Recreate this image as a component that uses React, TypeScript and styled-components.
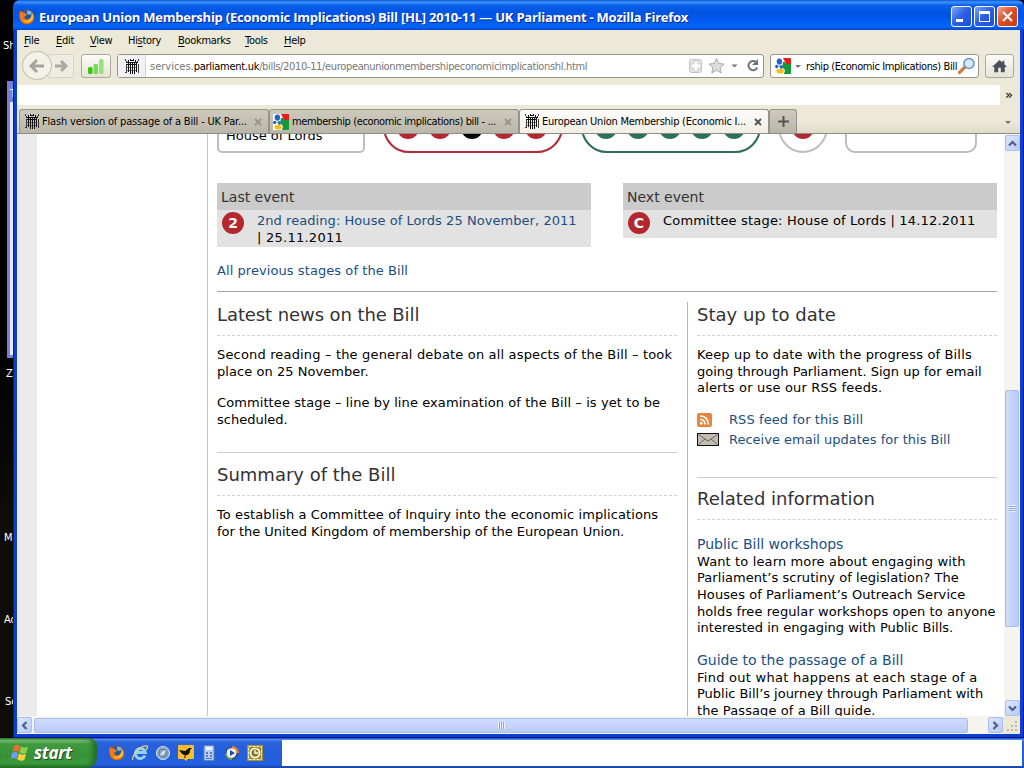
import React from 'react';
import styled, { createGlobalStyle, css } from 'styled-components';

const GlobalStyle = createGlobalStyle`
  * {
    box-sizing: border-box;
  }

  body {
    margin: 0;
    overflow: hidden;
    background: #000;
  }
`;

const stagesRed = [0, 1, 2, 3, 4];
const stagesGreen = [0, 1, 2, 3, 4];

const PortcullisIcon: React.FC = () => (
  <svg width="14" height="15" viewBox="0 0 14 15" shapeRendering="crispEdges" fill="#111">
    <path d="M3 1h1v2H3zM5 0h1v2H5zM8 0h1v2H8zM10 1h1v2h-1zM6 1h2v1H6zM1 3h12v1H1zM2 5h10v1H2z" />
    <path d="M3 4h1v9H3zM5 4h1v11H5zM7 4h1v11H7zM9 4h1v11H9zM11 4h1v9h-1z" />
    <path d="M0 0h1v2H0zM13 0h1v2h-1zM1 2h1v1H1zM12 2h1v1h-1zM1 5h1v9H1zM13 5h1v9h-1zM0 13h1v1H0z" opacity=".8" />
    <path d="M2 8h10v1H2zM2 11h10v1H2z" opacity=".45" />
  </svg>
);

const GoogleIcon: React.FC = () => (
  <svg width="16" height="16" viewBox="0 0 16 16">
    <path d="M0 0h10v16H0z" fill="#fff" />
    <path d="M8 0h7a1 1 0 0 1 1 1v5h-5z" fill="#e81e1e" />
    <path d="M8 4l2 0 1 2h5v9a1 1 0 0 1-1 1H9l1-4-3-3z" fill="#129a3a" />
    <ellipse cx="4.4" cy="3.6" rx="2.7" ry="3.1" fill="#2462c8" />
    <circle cx="1.7" cy="8.5" r="1.7" fill="#2462c8" />
    <path d="M4 8l3-1 1 3-2 1z" fill="#2462c8" />
    <ellipse cx="5.2" cy="13.2" rx="3.6" ry="2.4" fill="#f5bd16" />
  </svg>
);

const FirefoxIcon: React.FC = () => (
  <svg width="16" height="16" viewBox="0 0 16 16">
    <circle cx="8" cy="8" r="7.4" fill="#c84408" />
    <circle cx="8.5" cy="6.4" r="5.4" fill="#24569c" />
    <path d="M8 2c2-1 4 0 5 2l-2 2-3-1z" fill="#75b9e2" />
    <path d="M1 2l2 1 3 1 2 2-3 2c1 3 5 3 7 1 1-2 1-4 0-6 3 2 4 6 2 9-3 4-9 4-12 0-2-3-2-7-1-10z" fill="#ee7b13" />
    <path d="M13 4c2 3 1 8-3 9-3 1-5 0-6-2 3 2 8 1 9-7z" fill="#fbc72f" />
  </svg>
);

const App: React.FC = () => (
  <Screen>
    <GlobalStyle />
    <Workspace>
      <Desktop>
        <BackWindow>
          <BackTitle>T</BackTitle>
        </BackWindow>
        <DesktopLabel $x={3} $y={39}>Sh</DesktopLabel>
        <DesktopLabel $x={6} $y={367}>Z</DesktopLabel>
        <DesktopLabel $x={4} $y={531}>M</DesktopLabel>
        <DesktopLabel $x={4} $y={613}>Ad</DesktopLabel>
        <DesktopLabel $x={5} $y={695}>Se</DesktopLabel>
      </Desktop>

      <BrowserWindow>
        <TitleBar>
          <FirefoxIcon />
          <TitleText>European Union Membership (Economic Implications) Bill [HL] 2010-11 — UK Parliament - Mozilla Firefox</TitleText>
          <WindowButton>
            <svg width="19" height="19"><path d="M4 12h7v3H4z" fill="#fff" /></svg>
          </WindowButton>
          <WindowButton>
            <svg width="19" height="19"><path d="M4 4h11v11H4zM5 7v7h9V7z" fill="#fff" fillRule="evenodd" /></svg>
          </WindowButton>
          <WindowButton $close>
            <svg width="19" height="19"><path d="M5 5l9 9M14 5l-9 9" stroke="#fff" strokeWidth="2.2" /></svg>
          </WindowButton>
        </TitleBar>

        <WindowBody>
          <MenuBar>
            <MenuItem $w={32}><u>F</u>ile</MenuItem>
            <MenuItem $w={34}><u>E</u>dit</MenuItem>
            <MenuItem $w={38}><u>V</u>iew</MenuItem>
            <MenuItem $w={50}>Hi<u>s</u>tory</MenuItem>
            <MenuItem $w={67}><u>B</u>ookmarks</MenuItem>
            <MenuItem $w={39}><u>T</u>ools</MenuItem>
            <MenuItem $w={40}><u>H</u>elp</MenuItem>
          </MenuBar>

          <NavBar>
            <BackButton>
              <svg width="16" height="16" viewBox="0 0 16 16"><path d="M8 2L2 8l6 6M2.500 8H15" fill="none" stroke="#a5a49c" strokeWidth="3" /></svg>
            </BackButton>
            <ForwardButton>
              <svg width="13" height="14" viewBox="0 0 13 14"><path d="M6 2l5 5-5 5M0 7h11" fill="none" stroke="#aaa9a1" strokeWidth="3" /></svg>
            </ForwardButton>
            <SignalButton>
              <svg width="16" height="15" viewBox="0 0 16 15">
                <rect x="0" y="8" width="4.500" height="7" rx="1.500" fill="#39c414" />
                <rect x="5.500" y="5" width="4.500" height="10" rx="1.500" fill="#74dc55" />
                <rect x="11" y="0" width="4.500" height="15" rx="1.500" fill="#93e578" />
              </svg>
            </SignalButton>
            <AddressBar>
              <SiteIdentity><PortcullisIcon /></SiteIdentity>
              <Url>services.<b>parliament.uk</b><span>/bills/2010-11/europeanunionmembershipeconomicimplicationshl.html</span></Url>
              <svg width="80" height="20" viewBox="0 0 80 20">
                <rect x="6.500" y="3.500" width="12" height="13" rx="2" fill="#e5e5e5" stroke="#c4c4c4" />
                <path d="M11 5h4v3h3v4h-3v3h-4v-3H8V8h3z" fill="#fafafa" stroke="#c6c6c6" strokeWidth=".7" />
                <path d="M33.500 2.500l2.300 5 5.200.6-4 3.500 1.200 5.400-4.700-2.800-4.700 2.800 1.200-5.400-4-3.500 5.200-.6z" fill="#dedede" stroke="#aaa" />
                <path d="M48.500 8.500h6l-3 3z" fill="#777" />
                <path d="M73 6a4.600 4.600 0 1 0 1.300 5.500" fill="none" stroke="#6e7478" strokeWidth="2" />
                <path d="M75 3v6h-6z" fill="#6e7478" />
              </svg>
            </AddressBar>
            <SearchBox>
              <GoogleIcon />
              <svg width="14" height="8"><path d="M4 3h6L7 6z" fill="#777" /></svg>
              <SearchText>rship (Economic Implications) Bill</SearchText>
              <svg width="18" height="18" viewBox="0 0 18 18">
                <path d="M1.500 15.500L7 10" stroke="#c98145" strokeWidth="3.200" strokeLinecap="round" />
                <circle cx="11" cy="6.500" r="5" fill="#d4eafb" stroke="#6b93c6" strokeWidth="1.600" />
              </svg>
            </SearchBox>
            <HomeButton>
              <svg width="15" height="14" viewBox="0 0 17 16"><path d="M8.500 1L0 9h2.500v6h4.500v-5h3v5h4.500V9H17l-3-3V2h-2v2z" fill="#49525a" /></svg>
            </HomeButton>
          </NavBar>

          <BookmarkBar>
            <BookmarkBlank />
            <Chevron>»</Chevron>
          </BookmarkBar>

          <TabStrip>
            <Tab>
              <PortcullisIcon />
              <TabText $ls={-0.18}>Flash version of passage of a Bill - UK Par...</TabText>
              <CloseMark />
            </Tab>
            <Tab $tight>
              <GoogleIcon />
              <TabText $ls={-0.38}>membership (economic implications) bill - ...</TabText>
              <CloseMark />
            </Tab>
            <Tab $active>
              <PortcullisIcon />
              <TabText $ls={-0.24}>European Union Membership (Economic I...</TabText>
              <CloseMark $active />
            </Tab>
            <NewTab>
              <svg width="11" height="11"><path d="M4.500 0h2v4.500H11v2H6.500V11h-2V6.500H0v-2h4.500z" fill="#555" /></svg>
            </NewTab>
            <TabMenu>
              <svg width="6" height="3"><path d="M0 0h6L3 3z" fill="#777" /></svg>
            </TabMenu>
          </TabStrip>

          <Viewport>
            <PageGutter />
            <PageMargin />
            <Page>
              <StageRow>
                <StageBox $w={148} $r={5}><StageName>House of Lords</StageName></StageBox>
                <Pill $color="#b22d37" $ml={18}>
                  {stagesRed.map((i) => <Dot key={i} $color={i === 2 ? '#000' : '#b5272f'} />)}
                </Pill>
                <Pill $color="#2d6e58" $ml={18}>
                  {stagesGreen.map((i) => <Dot key={i} $color="#2c7057" />)}
                </Pill>
                <Ring><Dot $color="#b5272f" /></Ring>
                <StageBox $w={132} $r={10} $ml={17}><RoyalAssent>Royal Assent</RoyalAssent></StageBox>
              </StageRow>

              <Events>
                <Event>
                  <EventHead>Last event</EventHead>
                  <EventBody $h={37}>
                    <Badge>2</Badge>
                    <EventText>
                      <Link $ls={0.055}>2nd reading: House of Lords 25 November, 2011</Link>
                      <Line $ls={0.25}>| 25.11.2011</Line>
                    </EventText>
                  </EventBody>
                </Event>
                <Event>
                  <EventHead>Next event</EventHead>
                  <EventBody $h={28}>
                    <Badge>C</Badge>
                    <EventText><Line $ls={0.18}>Committee stage: House of Lords | 14.12.2011</Line></EventText>
                  </EventBody>
                </Event>
              </Events>

              <AllStages><Link $ls={0.07}>All previous stages of the Bill</Link></AllStages>

              <Columns>
                <MainColumn>
                  <Heading $ls={-0.09}>Latest news on the Bill</Heading>
                  <Paragraph>
                    <Line $ls={0.165}>Second reading – the general debate on all aspects of the Bill – took</Line>
                    <Line $ls={0.05}>place on 25 November.</Line>
                  </Paragraph>
                  <Paragraph>
                    <Line $ls={0.09}>Committee stage – line by line examination of the Bill – is yet to be</Line>
                    <Line>scheduled.</Line>
                  </Paragraph>
                  <Divider $top={24} />
                  <Heading $h={43}>Summary of the Bill</Heading>
                  <Paragraph>
                    <Line $ls={0.1}>To establish a Committee of Inquiry into the economic implications</Line>
                    <Line $ls={-0.02}>for the United Kingdom of membership of the European Union.</Line>
                  </Paragraph>
                </MainColumn>
                <SideColumn>
                  <Heading>Stay up to date</Heading>
                  <SideText>
                    <Line $ls={0.16}>Keep up to date with the progress of Bills</Line>
                    <Line>going through Parliament. Sign up for email</Line>
                    <Line $ls={0.17}>alerts or use our RSS feeds.</Line>
                  </SideText>
                  <FeedList>
                    <FeedRow>
                      <svg width="15" height="14" viewBox="0 0 15 14">
                        <rect width="15" height="14" rx="2" fill="#e9843c" />
                        <path d="M3 3c5 0 8 3 8.500 8.500M3 6.500c3 0 5 2 5 5" stroke="#fff" strokeWidth="1.700" fill="none" />
                        <circle cx="4.200" cy="10.300" r="1.400" fill="#fff" />
                      </svg>
                      <Link $ls={0.09}>RSS feed for this Bill</Link>
                    </FeedRow>
                    <FeedRow>
                      <svg width="22" height="13" viewBox="0 0 22 13">
                        <rect x=".5" y=".5" width="21" height="12" fill="#c4bcb2" stroke="#111" />
                        <path d="M1.500 1.500L11 8l9.500-6.500M1.500 11.500L8 6M20.500 11.500L14 6" stroke="#6b6660" fill="none" />
                      </svg>
                      <Link>Receive email updates for this Bill</Link>
                    </FeedRow>
                  </FeedList>
                  <Divider $top={27} />
                  <Heading $h={42} $raised>Related information</Heading>
                  <Related $top={16}>
                    <RelatedLink>Public Bill workshops</RelatedLink>
                    <SideText $flush>
                      <Line $ls={0.13}>Want to learn more about engaging with</Line>
                      <Line $ls={0.05}>Parliament’s scrutiny of legislation? The</Line>
                      <Line $ls={0.08}>Houses of Parliament’s Outreach Service</Line>
                      <Line $ls={0.09}>holds free regular workshops open to anyone</Line>
                      <Line>interested in engaging with Public Bills.</Line>
                    </SideText>
                  </Related>
                  <Related $top={15}>
                    <RelatedLink>Guide to the passage of a Bill</RelatedLink>
                    <SideText $flush>
                      <Line $ls={0.27}>Find out what happens at each stage of a</Line>
                      <Line $ls={-0.02}>Public Bill’s journey through Parliament with</Line>
                      <Line $ls={0.1}>the Passage of a Bill guide.</Line>
                    </SideText>
                  </Related>
                </SideColumn>
              </Columns>
            </Page>

            <VScroll>
              <ScrollButton><Arrow $turn={0} /></ScrollButton>
              <ScrollGap $size={239} />
              <VThumb><Grip /></VThumb>
              <ScrollFill />
              <ScrollButton><Arrow $turn={180} /></ScrollButton>
            </VScroll>
          </Viewport>

          <HScroll>
            <ScrollButton><Arrow $turn={270} /></ScrollButton>
            <HThumb><Grip $vertical /></HThumb>
            <ScrollFill />
            <ScrollButton><Arrow $turn={90} /></ScrollButton>
            <Corner>
              <svg width="12" height="12" fill="#c9b9a0">
                <path d="M9 1h2v2H9zM5 5h2v2H5zM9 5h2v2H9zM1 9h2v2H1zM5 9h2v2H5zM9 9h2v2H9z" />
              </svg>
            </Corner>
          </HScroll>
        </WindowBody>
      </BrowserWindow>
    </Workspace>

    <Taskbar>
      <StartButton>
        <svg width="19" height="18" viewBox="0 0 19 18">
          <path d="M3 2c2-1.500 4-1.500 6 0L7.500 8c-2-1.200-4-1.200-6 0z" fill="#ef6b34" />
          <path d="M10 2.500c2 1.400 4 1.400 7 .2L15.300 9c-2 1-5 1-7-.4z" fill="#8ed04a" />
          <path d="M1.200 9c2-1.200 4-1.200 6 0l-1.600 6c-2-1.300-4-1.300-6 0z" fill="#6f9bf2" />
          <path d="M8 9.600c2 1.400 4.500 1.400 7 .3L13.300 16c-2.500 1.100-5 1-7-.4z" fill="#fbd13c" />
        </svg>
        start
      </StartButton>
      <QuickLaunch>
        <FirefoxIcon />
        <svg width="16" height="16" viewBox="0 0 16 16">
          <path d="M13 10.500a5 5 0 1 1 .3-3H5" fill="none" stroke="#8fd3fb" strokeWidth="3" />
          <path d="M1 15C-1 11 9 0 15 1c1 .5 0 3-1 4" fill="none" stroke="#e8d27a" strokeWidth="1.300" />
        </svg>
        <svg width="16" height="16" viewBox="0 0 16 16">
          <circle cx="8" cy="8" r="6.600" fill="#8fa9c4" stroke="#c9dcee" />
          <circle cx="8" cy="8" r="4" fill="none" stroke="#5a7894" />
          <path d="M5 11l2-4 4-2-2 4z" fill="#dce8f2" />
        </svg>
        <svg width="16" height="16" viewBox="0 0 16 16">
          <path d="M1 0h14a1 1 0 0 1 1 1v12a1 1 0 0 1-1 1h-5l-2 2-2-2H1a1 1 0 0 1-1-1V1a1 1 0 0 1 1-1z" fill="#fbbd28" />
          <path d="M1 5l6 1 4-3 3 0-2 2c0 4-2 5-4 5l-1 3H6l1-3c-2 0-4-2-6-5z" fill="#111" />
        </svg>
        <svg width="16" height="16" viewBox="0 0 16 16">
          <rect x="3" y=".5" width="10" height="15" rx="1" fill="#b9cdf0" stroke="#5f82c0" />
          <rect x="5" y="2" width="6" height="3" fill="#edf4ff" />
          <path d="M5 7h2v2H5zM9 7h2v2H9zM5 10h2v2H5zM9 10h2v2H9zM5 13h6v1H5z" fill="#5678b5" />
        </svg>
        <svg width="16" height="16" viewBox="0 0 16 16">
          <circle cx="8" cy="8" r="7" fill="#35558b" />
          <path d="M8 1a7 7 0 0 1 7 7h-3L8 4z" fill="#e7802e" />
          <path d="M1 8a7 7 0 0 0 7 7v-3z" fill="#64ab43" />
          <circle cx="7.500" cy="8" r="4.800" fill="#f4f8ff" />
          <path d="M6 5l5 3-5 3z" fill="#204e9c" />
        </svg>
        <svg width="16" height="16" viewBox="0 0 16 16">
          <rect width="16" height="16" fill="#a89334" />
          <rect x="1.500" y="1.500" width="13" height="13" fill="none" stroke="#f2e7ad" strokeDasharray="3 1" />
          <circle cx="8" cy="8" r="4.500" fill="#8c7b20" stroke="#fff" strokeWidth="1.700" />
          <path d="M8 5v3h3" fill="none" stroke="#fff" strokeWidth="1.300" />
        </svg>
      </QuickLaunch>
      <TaskArea />
    </Taskbar>
  </Screen>
);

export default App;

const CloseMark: React.FC<{ $active?: boolean }> = ({ $active }) => (
  <svg width="8" height="8" viewBox="0 0 8 8">
    <path d="M1 1l6 6M7 1L1 7" stroke={$active ? '#555' : '#96948a'} strokeWidth="1.800" />
  </svg>
);

const Arrow: React.FC<{ $turn: number }> = ({ $turn }) => (
  <svg width="9" height="9" viewBox="0 0 9 9">
    <path d="M1 6.500L4.500 3 8 6.500" fill="none" stroke="#4d6185" strokeWidth="2.200" transform={`rotate(${$turn} 4.500 4.500)`} />
  </svg>
);

const ui = css`
  font-family: 'DejaVu Sans Condensed', 'DejaVu Sans', sans-serif;
  font-stretch: condensed;
  font-size: 11px;
`;

const Screen = styled.div`
  display: flex;
  flex-direction: column;
  width: 1024px;
  height: 768px;
  overflow: hidden;
  background: #000;
`;

const Workspace = styled.div`
  display: flex;
  height: 738px;
`;

const Desktop = styled.div`
  position: relative;
  width: 13px;
  overflow: hidden;
  background: linear-gradient(#000 0%, #000 45%, #0d0c08 70%);
`;

const BackWindow = styled.div`
  position: absolute;
  left: 7px;
  top: 81px;
  width: 12px;
  height: 277px;
  border: 3px solid #747fd8;
  background: #e9ebfb;
`;

const BackTitle = styled.div`
  ${ui}
  height: 18px;
  background: #747fd8;
  color: #fff;
  line-height: 20px;
`;

const DesktopLabel = styled.span<{ $x: number; $y: number }>`
  ${ui}
  position: absolute;
  left: ${(p) => p.$x}px;
  top: ${(p) => p.$y}px;
  color: #fff;
  line-height: 13px;
`;

const BrowserWindow = styled.div`
  display: flex;
  flex-direction: column;
  width: 1011px;
  padding: 0 4px 4px;
  border-radius: 7px 7px 0 0;
  background: #0c3fd0;
  box-shadow: inset 1px 0 #0019a8, inset -1px 0 #00138c, inset 0 -1px #00138c;
`;

const TitleBar = styled.div`
  display: flex;
  flex: none;
  align-items: center;
  gap: 2px;
  height: 30px;
  margin: 0 -4px;
  padding: 3px 6px 0 6px;
  border-radius: 7px 7px 0 0;
  background: linear-gradient(#0a57d8 0%, #3c92fb 7%, #0a5fea 18%, #0054e3 40%, #0058ee 65%, #0466fc 88%, #0148cf 100%);

  svg {
    flex: none;
  }
`;

const TitleText = styled.div`
  flex: 1;
  margin-left: 2px;
  color: #fff;
  font: bold 13px/18px 'Open Sans', 'Noto Sans', sans-serif;
  letter-spacing: -0.235px;
  text-shadow: 1px 1px #0a2a8c;
  white-space: nowrap;
`;

const WindowButton = styled.div<{ $close?: boolean }>`
  flex: none;
  width: 21px;
  height: 21px;
  border: 1px solid #fff;
  border-radius: 3px;
  background: ${(p) => (p.$close ? 'linear-gradient(135deg, #f0a088, #dd4a20 50%, #c83a10)' : 'linear-gradient(135deg, #7fa4f4, #2a5ce4 50%, #1f4fd8)')};
`;

const WindowBody = styled.div`
  display: flex;
  flex-direction: column;
  height: 704px;
  background: #ece9d8;
`;

const MenuBar = styled.div`
  display: flex;
  height: 21px;
  padding-left: 7px;
`;

const MenuItem = styled.div<{ $w: number }>`
  ${ui}
  flex: none;
  width: ${(p) => p.$w}px;
  color: #000;
  line-height: 21px;
  letter-spacing: -0.3px;
  white-space: nowrap;

  u {
    text-underline-offset: 2px;
  }
`;

const NavBar = styled.div`
  display: flex;
  align-items: flex-start;
  height: 34px;
  padding: 3px 5px 0;
`;

const BackButton = styled.div`
  display: flex;
  flex: none;
  align-items: center;
  justify-content: center;
  z-index: 1;
  width: 30px;
  height: 29px;
  margin-top: -3px;
  border: 1px solid #c3c0b3;
  border-radius: 50%;
  background: #f3f1e8;
`;

const ForwardButton = styled.div`
  display: flex;
  flex: none;
  align-items: center;
  width: 27px;
  height: 24px;
  margin-left: -5px;
  padding-left: 7px;
  border: 1px solid #d6d3c6;
  border-radius: 3px;
  background: #efede2;
`;

const button = css`
  display: flex;
  flex: none;
  align-items: center;
  justify-content: center;
  height: 24px;
  border: 1px solid #aaa99f;
  border-radius: 3px;
  background: linear-gradient(#fbfaf7, #e6e3d6);
`;

const SignalButton = styled.div`
  ${button}
  width: 30px;
  margin-left: 7px;
`;

const AddressBar = styled.div`
  display: flex;
  flex: none;
  align-items: center;
  width: 647px;
  height: 24px;
  margin-left: 6px;
  border: 1px solid #96948b;
  border-radius: 3px;
  background: #fff;
`;

const SiteIdentity = styled.div`
  display: flex;
  align-items: center;
  justify-content: center;
  width: 28px;
  height: 22px;
  border-right: 1px solid #d5d5d5;
  background: #f1f1f3;
`;

const Url = styled.div`
  ${ui}
  flex: 1;
  padding-left: 4px;
  color: #777;
  white-space: nowrap;

  b {
    color: #000;
    font-weight: normal;
    letter-spacing: -0.28px;
  }

  span {
    letter-spacing: -0.34px;
  }
`;

const SearchBox = styled.div`
  display: flex;
  flex: none;
  align-items: center;
  width: 209px;
  height: 24px;
  margin-left: 6px;
  padding-left: 4px;
  border: 1px solid #96948b;
  border-radius: 3px;
  background: #fff;
`;

const SearchText = styled.div`
  ${ui}
  width: 153px;
  padding-left: 1px;
  color: #000;
  letter-spacing: -0.4px;
  white-space: nowrap;
`;

const HomeButton = styled.div`
  ${button}
  width: 29px;
  margin-left: 6px;
`;

const BookmarkBar = styled.div`
  display: flex;
  height: 20px;
`;

const BookmarkBlank = styled.div`
  width: 983px;
  background: #fff;
`;

const Chevron = styled.div`
  padding-left: 5px;
  color: #000;
  font: 13px/20px 'DejaVu Sans', sans-serif;
`;

const TabStrip = styled.div`
  display: flex;
  align-items: flex-end;
  height: 29px;
  padding-left: 2px;
  border-bottom: 1px solid #8f8d82;
  background: linear-gradient(#ece9d8 60%, #dedbcb);
`;

const Tab = styled.div<{ $active?: boolean; $tight?: boolean }>`
  display: flex;
  flex: none;
  align-items: center;
  width: 250px;
  height: 24px;
  padding: 0 6px 0 ${(p) => (p.$tight ? 3 : 5)}px;
  border: 1px solid #96948a;
  border-bottom: 0;
  border-radius: 3px 3px 0 0;
  background: ${(p) => (p.$active ? 'linear-gradient(#fdfcfa, #f1eee4)' : 'linear-gradient(#cdcabd, #bab7aa)')};

  svg {
    flex: none;
  }
`;

const TabText = styled.div<{ $ls: number }>`
  ${ui}
  flex: 1;
  padding-left: 3px;
  color: #000;
  letter-spacing: ${(p) => p.$ls}px;
  white-space: nowrap;
`;

const NewTab = styled.div`
  display: flex;
  align-items: center;
  justify-content: center;
  width: 28px;
  height: 24px;
  border: 1px solid #96948a;
  border-bottom: 0;
  border-radius: 3px 3px 0 0;
  background: linear-gradient(#cdcabd, #bab7aa);
`;

const TabMenu = styled.div`
  display: flex;
  align-items: center;
  height: 22px;
  margin-left: auto;
  padding-right: 9px;
`;

const Viewport = styled.div`
  display: flex;
  height: 582px;
  overflow: hidden;
  background: #fff;
`;

const PageGutter = styled.div`
  flex: none;
  width: 20px;
  background: #ebebeb;
`;

const PageMargin = styled.div`
  flex: none;
  width: 170px;
`;

const Page = styled.div`
  flex: none;
  width: 797px;
  padding: 0 7px 0 9px;
  border-left: 1px solid #c8c8c8;
  color: #000;
  font: 13px/17px 'DejaVu Sans', Verdana, sans-serif;
  white-space: nowrap;
`;

const Line = styled.span<{ $ls?: number }>`
  display: block;
  letter-spacing: ${(p) => p.$ls || 0}px;
`;

const StageRow = styled.div`
  display: flex;
  align-items: flex-end;
  height: 19px;
  overflow: hidden;
`;

const StageBox = styled.div<{ $w: number; $r: number; $ml?: number }>`
  display: flex;
  flex: none;
  align-items: flex-end;
  width: ${(p) => p.$w}px;
  height: 52px;
  margin-left: ${(p) => p.$ml || 0}px;
  border: 2px solid #bdbdbd;
  border-radius: ${(p) => p.$r}px;
`;

const StageName = styled.div`
  padding: 0 0 7px 7px;
`;

const RoyalAssent = styled.div`
  padding: 0 0 15px 21px;
  font-size: 12px;
  font-weight: bold;
`;

const Pill = styled.div<{ $color: string; $ml: number }>`
  display: flex;
  flex: none;
  align-items: center;
  justify-content: center;
  gap: 10px;
  width: 180px;
  height: 52px;
  margin-left: ${(p) => p.$ml}px;
  padding: 2px 2px 0 0;
  border: 2px solid ${(p) => p.$color};
  border-radius: 26px;
`;

const Dot = styled.div<{ $color: string }>`
  flex: none;
  width: 22px;
  height: 22px;
  border-radius: 50%;
  background: ${(p) => p.$color};
`;

const Ring = styled.div`
  display: flex;
  flex: none;
  align-items: center;
  justify-content: center;
  width: 50px;
  height: 52px;
  margin-left: 17px;
  padding-top: 2px;
  border: 2px solid #bdbdbd;
  border-radius: 50%;
`;

const Events = styled.div`
  display: flex;
  gap: 32px;
  height: 94px;
  padding-top: 30px;
`;

const Event = styled.div`
  width: 374px;
`;

const EventHead = styled.div`
  height: 27px;
  padding-left: 4px;
  background: #cbcbcb;
  color: #333;
  font-size: 14px;
  line-height: 28px;
`;

const EventBody = styled.div<{ $h: number }>`
  display: flex;
  height: ${(p) => p.$h}px;
  padding: 2px 5px;
  background: #e2e2e2;
`;

const Badge = styled.div`
  flex: none;
  width: 22px;
  height: 22px;
  border-radius: 50%;
  background: #b5272f;
  color: #fff;
  font-size: 14px;
  font-weight: bold;
  line-height: 22px;
  text-align: center;
`;

const EventText = styled.div`
  padding-left: 13px;
`;

const Link = styled.a<{ $ls?: number }>`
  color: #1a4f80;
  letter-spacing: ${(p) => p.$ls || 0}px;
`;

const AllStages = styled.div`
  height: 45px;
  padding-top: 15px;
  border-bottom: 1px solid #a5a5a5;
`;

const Columns = styled.div`
  display: flex;
  padding-top: 10px;
`;

const MainColumn = styled.div`
  flex: none;
  width: 470px;
  padding-right: 10px;
`;

const SideColumn = styled.div`
  flex: none;
  width: 310px;
  height: 440px;
  padding-left: 9px;
  border-left: 1px solid #b5b5b5;
`;

const Heading = styled.h2<{ $h?: number; $raised?: boolean; $ls?: number }>`
  height: ${(p) => p.$h || 34}px;
  margin: 0;
  padding-top: ${(p) => (p.$h ? (p.$raised ? 9 : 10) : 1)}px;
  border-bottom: 1px dashed #d2d2d2;
  color: #333;
  font-size: 18px;
  font-weight: normal;
  line-height: 24px;
  letter-spacing: ${(p) => p.$ls || 0}px;
`;

const Paragraph = styled.p`
  margin: 0 0 14px;

  h2 + & {
    margin-top: 10px;
  }
`;

const Divider = styled.div<{ $top: number }>`
  height: 1px;
  margin-top: ${(p) => p.$top}px;
  background: #ccc;
`;

const SideText = styled.div<{ $flush?: boolean }>`
  padding-top: ${(p) => (p.$flush ? 0 : 11)}px;
  line-height: 16.6px;
`;

const FeedList = styled.div`
  padding-top: 13px;
`;

const FeedRow = styled.div`
  display: grid;
  grid-template-columns: 32px 1fr;
  align-items: center;
  height: 20px;
`;

const Related = styled.div<{ $top: number }>`
  padding-top: ${(p) => p.$top}px;
`;

const RelatedLink = styled.a`
  display: block;
  color: #1a4f80;
  font-size: 14px;
  line-height: 17px;
  padding-bottom: 1px;
`;

const VScroll = styled.div`
  display: flex;
  flex: none;
  flex-direction: column;
  align-items: center;
  width: 16px;
  padding-top: 1px;
  background: #f5f4ef;
`;

const ScrollButton = styled.div`
  display: flex;
  flex: none;
  align-items: center;
  justify-content: center;
  width: 15px;
  height: 16px;
  border: 1px solid #aabff0;
  border-radius: 2px;
  background: linear-gradient(135deg, #dbe5ff, #b9cbf8);
`;

const ScrollGap = styled.div<{ $size: number }>`
  flex: none;
  height: ${(p) => p.$size}px;
`;

const ScrollFill = styled.div`
  flex: 1;
`;

const VThumb = styled.div`
  display: flex;
  flex: none;
  align-items: center;
  justify-content: center;
  width: 14px;
  height: 237px;
  border: 1px solid #a9bdec;
  border-radius: 2px;
  background: linear-gradient(90deg, #d0ddff, #b9cbf9);
`;

const HScroll = styled.div`
  display: flex;
  align-items: center;
  height: 18px;
  background: #f5f4ef;
`;

const HThumb = styled.div`
  display: flex;
  flex: none;
  align-items: center;
  justify-content: center;
  width: 934px;
  height: 15px;
  margin-left: 2px;
  border: 1px solid #a9bdec;
  border-radius: 2px;
  background: linear-gradient(#d0ddff, #b9cbf9);
`;

const Grip = styled.div<{ $vertical?: boolean }>`
  width: 7px;
  height: 7px;
  background: repeating-linear-gradient(${(p) => (p.$vertical ? '90deg' : '180deg')}, #eef3ff 0 1px, #8ca5dd 1px 2px);
`;

const Corner = styled.div`
  display: flex;
  align-items: flex-end;
  justify-content: flex-end;
  width: 17px;
  height: 18px;
  padding: 2px;
  background: #ece9d8;
`;

const Taskbar = styled.div`
  display: flex;
  height: 30px;
  background: linear-gradient(#1c49b4 0%, #4a8af5 5%, #2b62dc 14%, #245edc 50%, #2360e0 88%, #1941a5 100%);
`;

const StartButton = styled.div`
  display: flex;
  align-items: center;
  gap: 4px;
  width: 97px;
  height: 30px;
  padding-left: 11px;
  border-radius: 0 8px 10px 0;
  background: linear-gradient(#2f7a2f 0%, #7cc278 8%, #3f9a3f 20%, #389138 60%, #3b9b3b 85%, #236d23 100%);
  box-shadow: inset -4px 0 5px #246a2c;
  color: #fff;
  font: italic bold 17px/28px 'Open Sans', 'Noto Sans', sans-serif;
  letter-spacing: -0.3px;
  text-shadow: 1px 1px 1px #1c4a1c;
`;

const QuickLaunch = styled.div`
  display: flex;
  align-items: center;
  gap: 7px;
  width: 185px;
  padding-left: 12px;
`;

const TaskArea = styled.div`
  width: 740px;
  height: 26px;
  margin-top: 2px;
  background: #fff;
`;
